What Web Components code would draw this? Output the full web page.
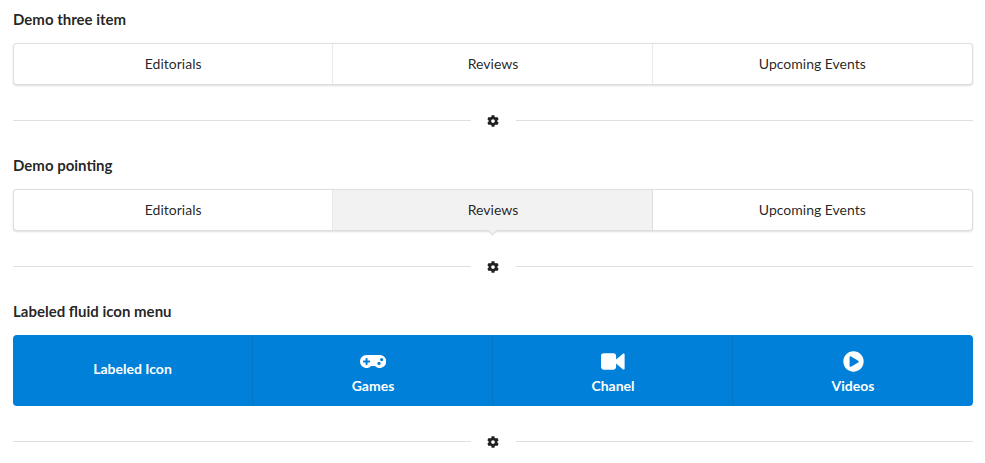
<!DOCTYPE html>
<html lang="en">
<head>
    <meta charset="UTF-8">
    <title>Menu demos</title>
    <style>
        body { margin: 0; padding: 0 12px 0 13px; background: #fff; color: rgba(0, 0, 0, 0.87); font: 14px/20px Lato, sans-serif; }
    </style>
</head>
<body>
    <demo-heading>Demo three item</demo-heading>
    <ui-menu>
        <ui-item>Editorials</ui-item>
        <ui-item>Reviews</ui-item>
        <ui-item>Upcoming Events</ui-item>
    </ui-menu>
    <gear-divider></gear-divider>

    <demo-heading>Demo pointing</demo-heading>
    <ui-menu>
        <ui-item>Editorials</ui-item>
        <ui-item active>Reviews</ui-item>
        <ui-item>Upcoming Events</ui-item>
    </ui-menu>
    <gear-divider></gear-divider>

    <demo-heading>Labeled fluid icon menu</demo-heading>
    <ui-menu blue>
        <ui-item bold>Labeled Icon</ui-item>
        <ui-item icon="gamepad">Games</ui-item>
        <ui-item icon="video">Chanel</ui-item>
        <ui-item icon="play">Videos</ui-item>
    </ui-menu>
    <gear-divider></gear-divider>

    <script>
        const ICONS = {
            gamepad: ['0 0 640 512', 'M480.07 96H160a160 160 0 1 0 114.24 272h91.52A160 160 0 1 0 480.07 96zM248 268a12 12 0 0 1-12 12h-52v52a12 12 0 0 1-12 12h-24a12 12 0 0 1-12-12v-52H84a12 12 0 0 1-12-12v-24a12 12 0 0 1 12-12h52v-52a12 12 0 0 1 12-12h24a12 12 0 0 1 12 12v52h52a12 12 0 0 1 12 12zm216 76a40 40 0 1 1 40-40 40 40 0 0 1-40 40zm64-96a40 40 0 1 1 40-40 40 40 0 0 1-40 40z'],
            video: ['0 0 576 512', 'M64 56H304C340 56 368 84 368 120V392C368 428 340 456 304 456H64C28 456 0 428 0 392V120C0 84 28 56 64 56zM368 208L536 64C552 52 576 62 576 84V428C576 450 552 460 536 448L368 304z'],
            play: ['0 0 512 512', 'M256 8C119 8 8 119 8 256s111 248 248 248 248-111 248-248S393 8 256 8zm115.7 272l-176 101c-15.8 8.8-35.7-2.5-35.7-20V152c0-17.4 19.8-28.8 35.7-20l176 107c16.4 9.2 16.4 32.9 0 41z'],
            cog: ['0 0 512 512', 'M487.4 315.7l-42.6-24.6c4.3-23.2 4.3-47 0-70.2l42.6-24.6c4.9-2.8 7.1-8.6 5.5-14-11.1-35.6-30-67.8-54.7-94.6-3.8-4.1-10-5.1-14.8-2.3L380.8 110c-17.9-15.4-38.5-27.3-60.8-35.1V25.8c0-5.6-3.9-10.5-9.4-11.7-36.7-8.2-74.3-7.8-109.2 0-5.5 1.2-9.4 6.1-9.4 11.7V75c-22.2 7.9-42.8 19.8-60.8 35.1L88.7 85.5c-4.9-2.8-11-1.9-14.8 2.3-24.7 26.7-43.6 58.9-54.7 94.6-1.7 5.4.6 11.2 5.5 14L67.3 221c-4.3 23.2-4.3 47 0 70.2l-42.6 24.6c-4.9 2.8-7.1 8.6-5.5 14 11.1 35.6 30 67.8 54.7 94.6 3.8 4.1 10 5.1 14.8 2.3l42.6-24.6c17.9 15.4 38.5 27.3 60.8 35.1v49.2c0 5.6 3.9 10.5 9.4 11.7 36.7 8.2 74.3 7.8 109.2 0 5.5-1.2 9.4-6.1 9.4-11.7v-49.2c22.2-7.9 42.8-19.8 60.8-35.1l42.6 24.6c4.9 2.8 11 1.9 14.8-2.3 24.7-26.7 43.6-58.9 54.7-94.6 1.5-5.5-.7-11.3-5.6-14.1zM256 336c-44.1 0-80-35.9-80-80s35.9-80 80-80 80 35.9 80 80-35.9 80-80 80z']
        };

        function iconSvg(name, size) {
            const [box, d] = ICONS[name];
            const w = box.split(' ')[2] / 512 * size;
            return `<svg width="${w}" height="${size}" viewBox="${box}" fill="currentColor"><path d="${d}"/></svg>`;
        }

        class DemoHeading extends HTMLElement {
            constructor() {
                super();
                this.attachShadow({ mode: 'open' }).innerHTML = `
                    <style>:host { display: block; padding-top: 9px; margin-bottom: 14px; font-weight: 700; font-size: 15px; line-height: 20px; color: rgba(0,0,0,.87); }</style>
                    <slot></slot>`;
            }
        }

        class UiMenu extends HTMLElement {
            constructor() {
                super();
                this.attachShadow({ mode: 'open' }).innerHTML = `
                    <style>
                        :host { display: flex; min-height: 40px; background: #fff; border: 1px solid rgba(34,36,38,.15); border-radius: 4px; box-shadow: 0 1px 2px 0 rgba(34,36,38,.15); }
                        :host([blue]) { background: #0080d8; border: 0; box-shadow: none; color: #fff; min-height: 71px; }
                    </style>
                    <slot></slot>`;
            }
        }

        class UiItem extends HTMLElement {
            constructor() {
                super();
                const icon = this.getAttribute('icon');
                this.attachShadow({ mode: 'open' }).innerHTML = `
                    <style>
                        :host { flex: 1 1 0; position: relative; display: flex; flex-direction: column; align-items: center; justify-content: center; font-size: 14px; line-height: 14px; }
                        :host(:not(:last-child)) { box-shadow: inset -1px 0 0 rgba(34,36,38,.1); }
                        :host(:first-child) .label { margin-right: 1px; }
                        :host([active]) { background: #f2f2f2; }
                        :host([active])::after { content: ""; position: absolute; left: 50%; bottom: -4px; width: 7px; height: 7px; margin-left: -3.5px; background: #f2f2f2; border: solid #dcdcdc; border-width: 0 1px 1px 0; box-sizing: border-box; transform: rotate(45deg); }
                        :host([icon]), :host([bold]) { font-weight: 700; }
                        :host([bold]) .label { margin-bottom: 3px; }
                        svg { display: block; margin: 2px 0 7px; }
                    </style>
                    ${icon ? iconSvg(icon, 21) : ''}<div class="label"><slot></slot></div>`;
            }
        }

        class GearDivider extends HTMLElement {
            constructor() {
                super();
                this.attachShadow({ mode: 'open' }).innerHTML = `
                    <style>
                        :host { display: flex; align-items: center; margin: 28px 0 19px; height: 14px; color: rgba(0,0,0,.87); }
                        i { flex: 1; height: 1px; background: #dedfe0; }
                        i:first-child { flex: 0 0 calc(50% - 23px); }
                        svg { display: block; margin: 1px 17px 0 16px; }
                    </style>
                    <i></i>${iconSvg('cog', 12)}<i></i>`;
            }
        }

        customElements.define('demo-heading', DemoHeading);
        customElements.define('ui-menu', UiMenu);
        customElements.define('ui-item', UiItem);
        customElements.define('gear-divider', GearDivider);
    </script>
</body>
</html>
